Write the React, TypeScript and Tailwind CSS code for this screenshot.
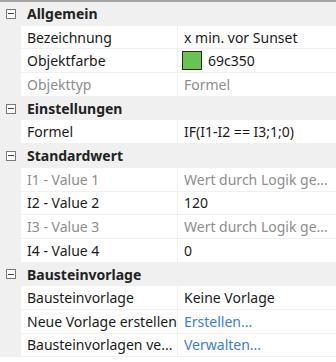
type Row =
  | { kind: 'header'; label: string }
  | { kind: 'prop'; name: string; value: string; dim?: boolean; link?: boolean; swatch?: string };

const rows: Row[] = [
  { kind: 'header', label: 'Allgemein' },
  { kind: 'prop', name: 'Bezeichnung', value: 'x min. vor Sunset' },
  { kind: 'prop', name: 'Objektfarbe', value: '69c350', swatch: '#69c350' },
  { kind: 'prop', name: 'Objekttyp', value: 'Formel', dim: true },
  { kind: 'header', label: 'Einstellungen' },
  { kind: 'prop', name: 'Formel', value: 'IF(I1-I2 == I3;1;0)' },
  { kind: 'header', label: 'Standardwert' },
  { kind: 'prop', name: 'I1 - Value 1', value: 'Wert durch Logik ge...', dim: true },
  { kind: 'prop', name: 'I2 - Value 2', value: '120' },
  { kind: 'prop', name: 'I3 - Value 3', value: 'Wert durch Logik ge...', dim: true },
  { kind: 'prop', name: 'I4 - Value 4', value: '0' },
  { kind: 'header', label: 'Bausteinvorlage' },
  { kind: 'prop', name: 'Bausteinvorlage', value: 'Keine Vorlage' },
  { kind: 'prop', name: 'Neue Vorlage erstellen', value: 'Erstellen...', link: true },
  { kind: 'prop', name: 'Bausteinvorlagen ve...', value: 'Verwalten...', link: true },
];

function CollapseBox() {
  return (
    <span className="w-[10px] h-[10px] border border-[#7a7a7a] bg-white flex items-center justify-center">
      <span className="block w-[6px] h-px bg-[#444]" />
    </span>
  );
}

export default function App() {
  return (
    <div
      className="w-[336px] h-[362px] bg-white overflow-hidden text-[14px] text-[#1a1a1a]"
      style={{ fontFamily: '"Noto Sans", "Open Sans", sans-serif' }}
    >
      <div className="border-t-2 border-[#a3a3a3]">
        {rows.map((r, i) =>
          r.kind === 'header' ? (
            <div key={i} className="h-[23.7px] flex items-center bg-[#f0f0f0]">
              <div className="w-[21px] flex justify-center pl-px">
                <CollapseBox />
              </div>
              <span className="pl-[6px] font-bold text-[#222]">{r.label}</span>
            </div>
          ) : (
            <div key={i} className="h-[23.7px] flex bg-[#f0f0f0]">
              <div className="w-[21px] shrink-0" />
              <div className="flex-1 flex">
                <div
                  className={`w-[156px] bg-white mb-px pl-[6px] flex items-center whitespace-nowrap overflow-hidden ${
                    r.dim ? 'text-[#8d8d8d]' : ''
                  }`}
                >
                  {r.name}
                </div>
                <div
                  className={`flex-1 bg-white mb-px ml-px pl-[6px] flex items-center gap-[6px] whitespace-nowrap overflow-hidden ${
                    r.dim ? 'text-[#8d8d8d]' : r.link ? 'text-[#3b7ddd]' : ''
                  }`}
                >
                  {r.swatch && (
                    <span
                      className="w-[20px] h-[19px] border border-[#2b2b2b] shrink-0 -ml-[2px]"
                      style={{ backgroundColor: r.swatch }}
                    />
                  )}
                  {r.value}
                </div>
              </div>
            </div>
          )
        )}
      </div>
    </div>
  );
}
